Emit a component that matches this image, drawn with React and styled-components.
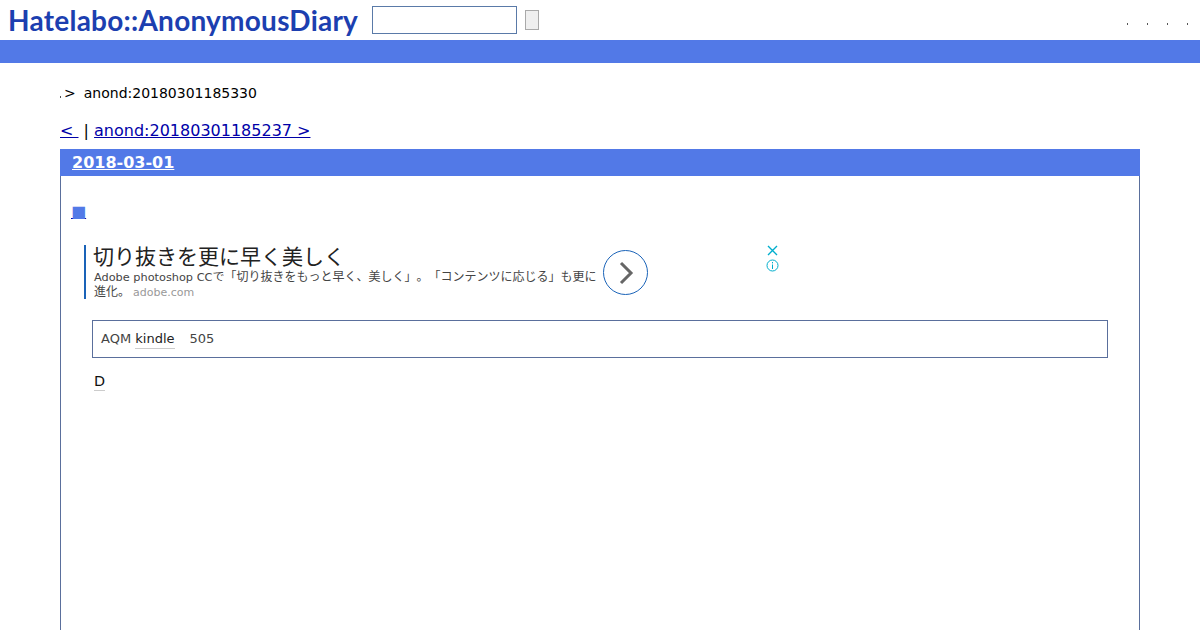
import React from "react";
import styled, { createGlobalStyle } from "styled-components";

const Global = createGlobalStyle`
  html, body { margin: 0; padding: 0; background: #fff; overflow: hidden; }
  body { font-family: "DejaVu Sans", sans-serif; color: #000; }
`;
const Page = styled.div`width: 1200px; height: 630px; overflow: hidden;`;
const Header = styled.header`
  height: 40px; display: flex; align-items: center; padding: 0 12px 0 8px; box-sizing: border-box;
`;
const Logo = styled.a`
  width: 350px; font-family: "Lato", sans-serif; font-weight: 700; font-size: 28px; line-height: 40px;
  color: #1c3fb0; white-space: nowrap; letter-spacing: 0.24px; display: block;
`;
const Search = styled.input`
  width: 145px; height: 28px; box-sizing: border-box; margin: 0 0 0 14px; padding: 0;
  border: 1px solid #5a7aa8; background: #fff; border-radius: 0;
`;
const Submit = styled.button`
  width: 14px; height: 20px; box-sizing: border-box; margin: 0 0 0 8px; padding: 0;
  border: 1px solid #a9a9a9; background: #efefef; border-radius: 0;
`;
const Tools = styled.nav`margin-left: auto; display: flex; gap: 19px; padding-top: 8px;`;
const Tick = styled.i`display: block; width: 1px; height: 2px; background: #555;`;
const Bar = styled.div`height: 23px; background: #5279e7;`;
const Main = styled.main`padding: 0 60px;`;
const Crumb = styled.div`
  display: flex; align-items: center; height: 20px; margin-top: 20px; font-size: 14px; line-height: 20px;
`;
const CrumbDot = styled.i`display: block; width: 1px; height: 2px; background: #555; margin: 8px 3px 0 0;`;
const CrumbArrow = styled.span`margin-right: 8px;`;
const Pager = styled.div`
  margin-top: 18px; height: 20px; font-size: 16px; line-height: 20px; white-space: pre;
  a { color: #0000a8; text-decoration: underline; }
`;
const Section = styled.section`
  margin-top: 8px; border: 1px solid #5a6f9c; border-top: 0; height: 500px; box-sizing: border-box;
`;
const SectionHead = styled.h2`
  margin: 0 -1px; height: 27px; background: #5279e7; padding: 0 0 0 12px;
  font-size: 16px; font-weight: 700; line-height: 27px;
  a { color: #fff; text-decoration: underline; }
`;
const Entry = styled.div`padding: 26px 10px 0 10px;`;
const Mark = styled.a`
  display: inline-block; height: 18px; font-size: 16px; line-height: 18px; color: #5279e7;
  text-decoration: underline; text-decoration-color: #0000a8;
`;
const Ad = styled.div`display: flex; align-items: flex-start; margin: 24px 0 0 13px; height: 54px;`;
const AdBody = styled.div`
  width: 512px; height: 54px; box-sizing: border-box; border-left: 2px solid #1a63b8; padding-left: 8px;
  font-family: "Noto Sans CJK JP", "DejaVu Sans", sans-serif; text-spacing-trim: space-all;
`;
const AdTitle = styled.div`
  font-size: 21px; line-height: 23px; color: #222; margin: -1px 0 0 -1px; white-space: nowrap;
`;
const AdText = styled.div`
  font-family: "DejaVu Sans", "Noto Sans CJK JP", sans-serif;
  font-size: 11.3px; line-height: 15px; color: #444; margin-top: 3px; white-space: nowrap;
`;
const Ja = styled.span`
  font-size: 12px; line-height: 0; font-family: "Noto Sans CJK JP", sans-serif; text-spacing-trim: space-all;
`;
const AdHost = styled.span`color: #999; margin-left: 3px; font-size: 11px;`;
const AdGo = styled.span`
  width: 45px; height: 45px; box-sizing: border-box; border: 1.3px solid #1a63b8; border-radius: 50%;
  margin: 5px 0 0 7px; flex: none; display: flex; align-items: center; justify-content: center;
`;
const AdSide = styled.div`
  margin-left: 117px; width: 14px; display: flex; flex-direction: column; align-items: center; gap: 3px;
`;
const Quote = styled.blockquote`
  margin: 21px 21px 0 21px; height: 38px; box-sizing: border-box; border: 1px solid #5a6f9c; padding: 0 8px;
  font-size: 13px; line-height: 36px; color: #444; display: flex; white-space: pre;
`;
const Keyword = styled.a`
  color: #222; height: 27px; line-height: 36px; border-bottom: 1px solid #ccc; display: block;
`;
const Count = styled.span`margin-left: 15px;`;
const Para = styled.p`margin: 13px 0 0 23px; font-size: 14.4px; line-height: 20px;`;
const ParaKey = styled.a`display: inline-block; color: #111; border-bottom: 1px solid #ccc; height: 19px;`;

export default function App() {
  return (
    <Page>
      <Global />
      <Header>
        <Logo>Hatelabo::AnonymousDiary</Logo>
        <Search />
        <Submit />
        <Tools><Tick /><Tick /><Tick /><Tick /></Tools>
      </Header>
      <Bar />
      <Main>
        <Crumb><CrumbDot /><CrumbArrow>&gt;</CrumbArrow>anond:20180301185330</Crumb>
        <Pager><a>&lt; </a> | <a>anond:20180301185237 &gt;</a></Pager>
        <Section>
          <SectionHead><a>2018-03-01</a></SectionHead>
          <Entry>
            <Mark>■</Mark>
            <Ad>
              <AdBody>
                <AdTitle>切り抜きを更に早く美しく</AdTitle>
                <AdText>Adobe photoshop CC<Ja>で「切り抜きをもっと早く、美しく」。「コンテンツに応じる」も更に</Ja><br /><Ja>進化。</Ja><AdHost>adobe.com</AdHost></AdText>
              </AdBody>
              <AdGo>
                <svg width="18" height="26" viewBox="0 0 18 26" fill="none" stroke="#666" strokeWidth="3"><path d="M4 3l10 10L4 23" /></svg>
              </AdGo>
              <AdSide>
                <svg width="11" height="11" viewBox="0 0 11 11" fill="none" stroke="#00aecd" strokeWidth="1.4"><path d="M1 1l9 9M10 1l-9 9" /></svg>
                <svg width="13" height="13" viewBox="0 0 13 13" fill="none" stroke="#00aecd" strokeWidth="1"><circle cx="6.5" cy="6.5" r="5.5" /><path d="M6.5 5.5v4.5M6.5 3v1.4" /></svg>
              </AdSide>
            </Ad>
            <Quote>AQM <Keyword>kindle</Keyword><Count>505</Count></Quote>
            <Para><ParaKey>D</ParaKey></Para>
          </Entry>
        </Section>
      </Main>
    </Page>
  );
}
